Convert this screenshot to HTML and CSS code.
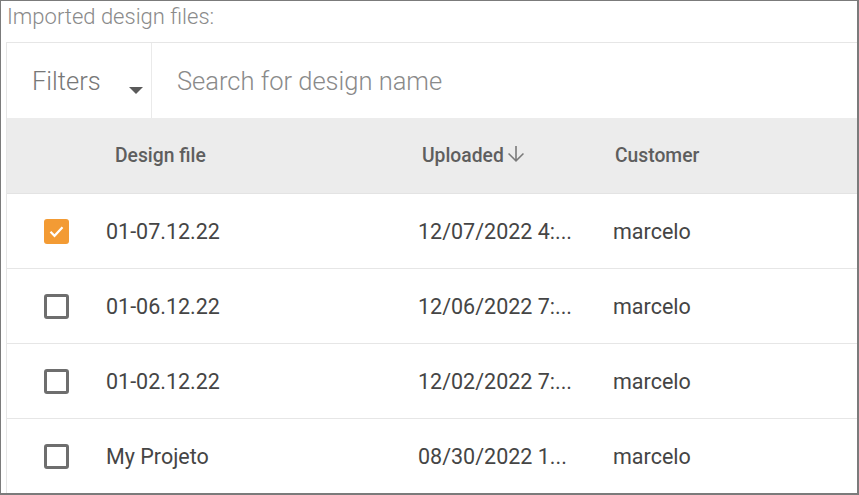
FILE: index.html
```html
<!DOCTYPE html>
<html lang="en">
<head>
<meta charset="utf-8">
<title>Imported design files</title>
<link rel="stylesheet" href="styles.css">
</head>
<body>
<div class="frame">
  <div class="title">Imported design files:</div>
  <div class="panel">
    <div class="toolbar">
      <div class="filters">
        <span class="filters-label">Filters</span>
        <svg class="caret" width="14" height="7" viewBox="0 0 14 7"><path d="M0 0h14L7 7z" fill="#5a5a5a"/></svg>
      </div>
      <div class="search">Search for design name</div>
    </div>
    <div class="row head">
      <div class="cell"></div>
      <div class="cell hcell h-design">Design file</div>
      <div class="cell hcell h-upl">Uploaded
        <svg class="sort" width="24" height="24" viewBox="0 0 24 24"><path d="M20 12l-1.1-1.1L12.8 17V4h-1.6v13L5.1 10.9 4 12l8 8 8-8z" fill="#7a7a7a"/></svg>
      </div>
      <div class="cell hcell h-cust">Customer</div>
    </div>
    <div class="row">
      <div class="cell chk-cell"><span class="chk on"><svg width="25" height="25" viewBox="0 0 25 25"><path d="M6.5 12.8l4 4 8-8.6" fill="none" stroke="#fff" stroke-width="2.2"/></svg></span></div>
      <div class="cell">01-07.12.22</div>
      <div class="cell">12/07/2022 4:...</div>
      <div class="cell">marcelo</div>
    </div>
    <div class="row">
      <div class="cell chk-cell"><span class="chk"></span></div>
      <div class="cell">01-06.12.22</div>
      <div class="cell">12/06/2022 7:...</div>
      <div class="cell">marcelo</div>
    </div>
    <div class="row">
      <div class="cell chk-cell"><span class="chk"></span></div>
      <div class="cell">01-02.12.22</div>
      <div class="cell">12/02/2022 7:...</div>
      <div class="cell">marcelo</div>
    </div>
    <div class="row">
      <div class="cell chk-cell"><span class="chk"></span></div>
      <div class="cell">My Projeto</div>
      <div class="cell">08/30/2022 1...</div>
      <div class="cell">marcelo</div>
    </div>
  </div>
</div>
</body>
</html>
```
FILE: styles.css
```css
html, body {
  margin: 0;
  padding: 0;
  background: #fff;
}
.frame {
  width: 859px;
  height: 495px;
  box-sizing: border-box;
  border: 1px solid #7b7b7b;
  border-right-width: 2px;
  border-bottom-width: 2px;
  overflow: hidden;
  padding: 2px 0 0 5px;
  font-family: Roboto, "Liberation Sans", sans-serif;
}
.title {
  font-size: 22px;
  font-weight: 300;
  line-height: 25px;
  color: #8a8a8a;
  padding-left: 1px;
  padding-top: 1px;
  height: 25px;
}
.panel {
  margin-top: 13px;
  border-top: 1px solid #e6e6e6;
  border-left: 1px solid #e6e6e6;
}
.toolbar {
  display: flex;
  height: 75px;
}
.filters {
  width: 145px;
  display: flex;
  align-items: center;
  border-right: 1px solid #eaeaea;
  padding-left: 25px;
  box-sizing: border-box;
}
.filters-label {
  font-size: 25.5px;
  font-weight: 300;
  color: #777;
}
.caret {
  margin-left: auto;
  margin-right: 8px;
  margin-top: 19px;
}
.search {
  display: flex;
  align-items: center;
  padding-left: 25px;
  font-size: 25.5px;
  font-weight: 300;
  color: #8a8a8a;
}
.row {
  display: grid;
  grid-template-columns: 86px 312px 195px 1fr;
  height: 75px;
  box-sizing: border-box;
  border-bottom: 1px solid #e6e6e6;
  font-size: 21.5px;
  color: #454545;
}
.row.head {
  height: 76px;
  background: #ececec;
  border-bottom: 1px solid #e3e3e3;
}
.cell {
  display: flex;
  align-items: center;
  padding-left: 13px;
  white-space: nowrap;
}
.hcell {
  font-size: 19.3px;
  font-weight: 500;
  color: #5e5e5e;
}
.h-design { padding-left: 22px; }
.h-upl { padding-left: 17px; }
.h-cust { padding-left: 15px; }
.sort {
  margin-left: 0;
  margin-top: -3px;
}
.chk-cell {
  padding-left: 37px;
}
.chk {
  display: block;
  width: 25px;
  height: 25px;
  box-sizing: border-box;
  border: 3px solid #6e6e6e;
  border-radius: 3px;
}
.chk.on {
  border: 0;
  background: #f39b34;
}
.chk.on svg {
  display: block;
}
```
